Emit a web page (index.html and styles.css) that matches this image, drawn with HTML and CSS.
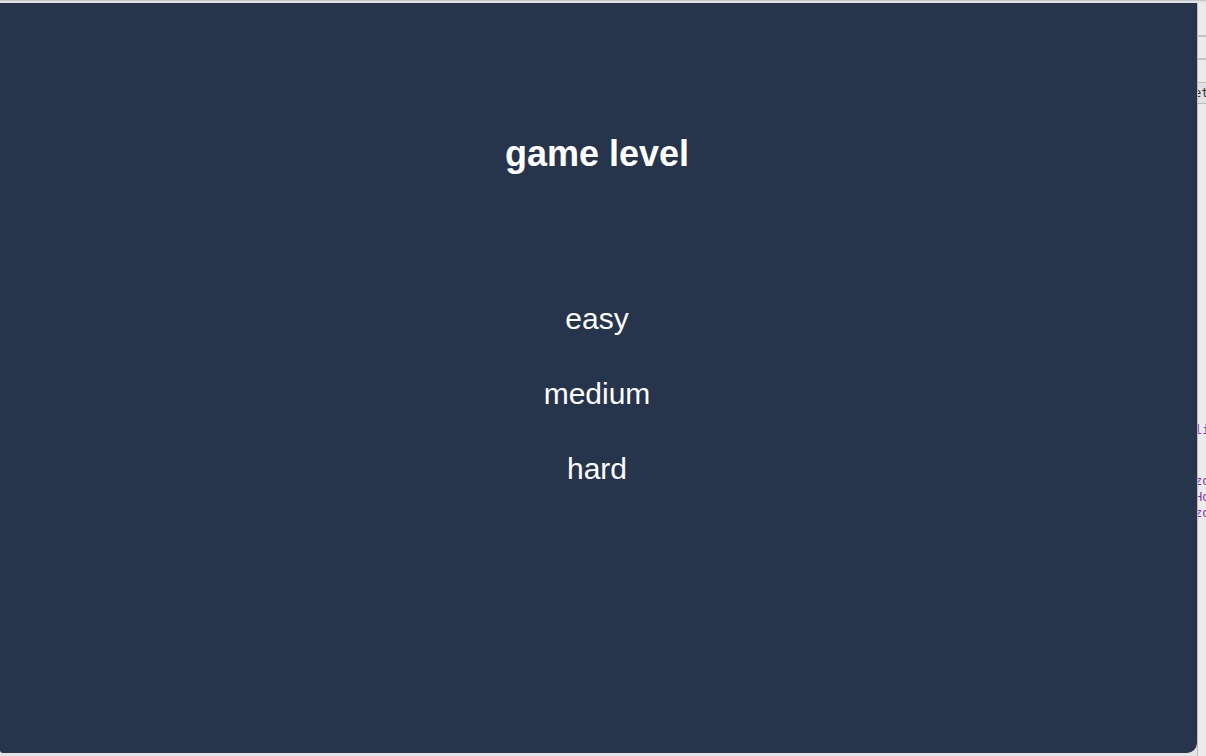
FILE: index.html
```html
<!DOCTYPE html>
<html lang="en">
<head>
<meta charset="utf-8">
<title>game level</title>
<link rel="stylesheet" href="styles.css">
</head>
<body>
<div class="screen">
  <main class="panel">
    <h1 class="title">game level</h1>
    <ul class="levels">
      <li class="level">easy</li>
      <li class="level">medium</li>
      <li class="level">hard</li>
    </ul>
  </main>
  <aside class="side">
    <div class="side-rule side-rule-1"></div>
    <div class="side-rule side-rule-2"></div>
    <div class="side-box">et</div>
    <div class="side-code side-code-1">li</div>
    <div class="side-code side-code-2">zo</div>
    <div class="side-code">Ho</div>
    <div class="side-code">zo</div>
  </aside>
</div>
</body>
</html>
```
FILE: styles.css
```css
html, body {
  margin: 0;
  padding: 0;
  width: 1206px;
  height: 756px;
  overflow: hidden;
  background: #e4e4e4;
  font-family: "Liberation Sans", Arial, Helvetica, sans-serif;
}

.screen {
  display: flex;
  height: 756px;
  padding-top: 2px;
  box-sizing: border-box;
  border-top: 1px solid #c8c8c8;
}

.panel {
  width: 1197px;
  height: 750px;
  flex: none;
  background: #26344c;
  color: #ffffff;
  border-bottom-right-radius: 10px;
  border-bottom-left-radius: 3px;
  display: flex;
  flex-direction: column;
  align-items: center;
  box-sizing: border-box;
  padding-top: 131px;
  padding-right: 3px;
}

.title {
  margin: 0;
  font-size: 36px;
  line-height: 40px;
  font-weight: 700;
}

.levels {
  list-style: none;
  margin: 128px 0 0;
  padding: 0;
  display: flex;
  flex-direction: column;
  align-items: center;
  gap: 41px;
}

.level {
  font-size: 30px;
  line-height: 34px;
}

.side {
  flex: 1;
  background: #ececec;
  border-left: 1px solid #b9b9b9;
  overflow: hidden;
  display: flex;
  flex-direction: column;
  font-family: "DejaVu Sans Mono", "Liberation Mono", monospace;
  font-size: 12px;
}

.side-rule {
  height: 2px;
  background: #c4c4c4;
}

.side-rule-1 { margin-top: 32px; }
.side-rule-2 { margin-top: 21px; }

.side-box {
  margin-top: 22px;
  height: 20px;
  line-height: 20px;
  background: #e2e2e2;
  border-top: 1px solid #bdbdbd;
  border-bottom: 1px solid #bdbdbd;
  color: #333;
  text-indent: -4px;
  white-space: nowrap;
}

.side-code {
  color: #8a2fb8;
  line-height: 16px;
  white-space: nowrap;
  text-indent: -3px;
}

.side-code-1 { margin-top: 318px; }
.side-code-2 { margin-top: 35px; }
```
